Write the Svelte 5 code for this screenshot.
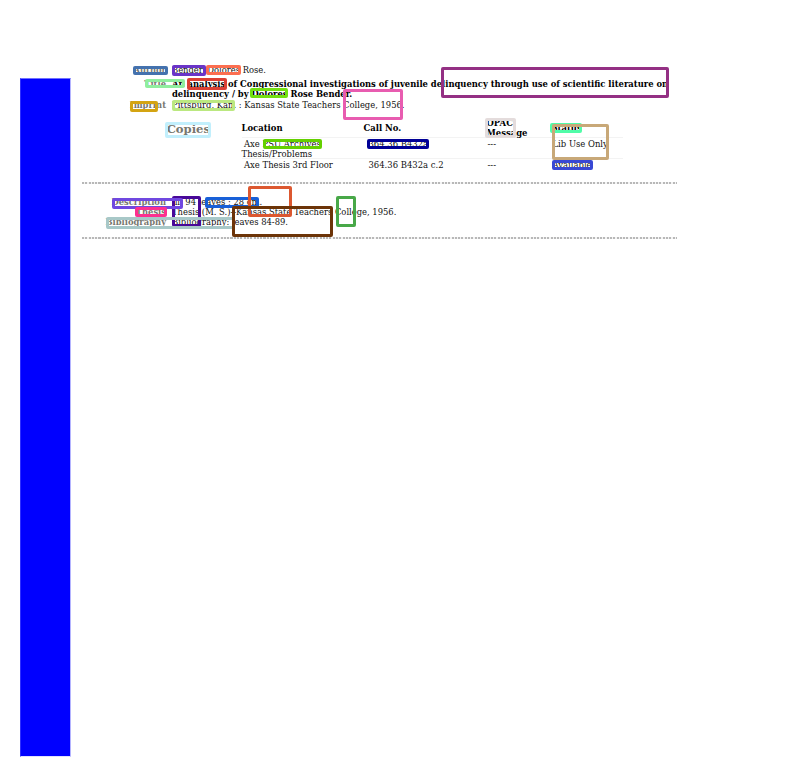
<script>
  const marks = [
    [133, 66, 35, 9, '#4472ae'],
    [172, 65, 34, 11, '#6a34c8'],
    [206, 65, 35, 10, '#fc6e50'],
    [145, 79, 40, 9, '#90ee9e'],
    [187, 78, 40, 12, '#dc4034'],
    [250, 88, 38, 10, '#72e010'],
    [130, 101, 28, 11, '#d4a412'],
    [172, 100, 63, 11, '#bbe880'],
    [343, 89, 60, 31, '#e85cb0'],
    [441, 67, 228, 31, '#943084'],
    [165, 122, 46, 16, '#c2effc'],
    [263, 139, 59, 10, '#64d000'],
    [367, 139, 62, 10, '#000096'],
    [485, 118, 31, 20, '#e4dcdc'],
    [550, 123, 32, 10, '#50fca8'],
    [552, 124, 57, 36, '#c8a878'],
    [552, 160, 41, 10, '#3848d4'],
    [172, 196, 29, 31, '#480898'],
    [112, 198, 71, 11, '#7048e0'],
    [205, 197, 54, 11, '#1860d8'],
    [135, 207, 32, 10, '#fc3090'],
    [106, 217, 129, 12, '#a8c8c8'],
    [248, 186, 44, 31, '#dc5830'],
    [336, 196, 20, 31, '#48a848'],
    [232, 206, 101, 31, '#6c3408']
  ];
</script>

<div class="page">
  <aside></aside>
  <main>
    <div class="row author"><b>Author</b><p>Bender, Dolores Rose.</p></div>
    <div class="row title"><b>Title</b><p>An analysis of Congressional investigations of juvenile delinquency through use of scientific literature on<br />delinquency / by Dolores Rose Bender.</p></div>
    <div class="row imprint"><b>Imprint</b><p>Pittsburg, Kan. : Kansas State Teachers College, 1956.</p></div>
    <div class="row copies">
      <b>Copies</b>
      <div class="table">
        <div class="tr head"><span>Location</span><span>Call No.</span><span>OPAC<br />Message</span><span>Status</span></div>
        <div class="tr first"><span><i></i>Axe PSU Archives<br />Thesis/Problems</span><span>364.36 B432a</span><span>---</span><span>Lib Use Only</span></div>
        <div class="tr last"><span><i></i>Axe Thesis 3rd Floor</span><span>364.36 B432a c.2</span><span>---</span><span>Available</span></div>
      </div>
    </div>
    <hr />
    <div class="notes">
      <div class="row"><b>Description</b><p>iii, 94 leaves ; 28 cm.</p></div>
      <div class="row"><b>Thesis</b><p>Thesis (M. S.)--Kansas State Teachers College, 1956.</p></div>
      <div class="row"><b>Bibliography</b><p>Bibliography: leaves 84-89.</p></div>
    </div>
    <hr />
  </main>
  {#each marks as [x, y, w, h, color]}
    <div class="mark" style="left:{x}px;top:{y}px;width:{w}px;height:{h}px;border-color:{color}"></div>
  {/each}
</div>

<style>
  .page {
    position: relative;
    display: flex;
    width: 803px;
    height: 768px;
    overflow: hidden;
    background: #fff;
    color: #111;
    font: 8.38px/10px "DejaVu Serif", serif;
    white-space: nowrap;
  }
  aside {
    box-sizing: border-box;
    width: 51px;
    height: 679px;
    margin: 78px 11px 0 20px;
    background: #00f;
    border: 1px solid;
    border-color: #7070ff #b4b4ff #e0e0ff #3030ff;
  }
  main { width: 595px; padding-top: 65px; }
  p { margin: 0; }
  .row { display: flex; gap: 6px; }
  .row > b { width: 84px; flex: none; display: flex; justify-content: flex-end; color: #77776f; }
  .author { height: 13.5px; }
  .title { height: 21.5px; }
  .title p { font-weight: bold; color: #000; }
  .imprint { height: 18px; }
  .copies { height: 64px; gap: 0; }
  .copies > b { width: 128px; margin-top: 6px; font-size: 11.6px; }
  .table { width: 381px; padding-left: 31.5px; font-size: 8.45px; }
  .tr { display: grid; grid-template-columns: 127px 119px 65px 70px; border-bottom: 1px solid #f3f3f3; box-sizing: border-box; }
  .head { height: 20px; font-weight: bold; color: #000; align-items: center; }
  .head span:nth-child(2) { margin-left: -5px; }
  .head span:nth-child(3) { margin-left: -1px; }
  .head span:nth-child(4) { margin-left: -1px; }
  .first { height: 21px; padding-top: 1px; }
  .last { height: 15px; padding-top: 1px; border: 0; }
  .tr i { display: inline-block; width: 2.5px; }
  hr { width: 595px; height: 2px; margin: 0; border: 0; background: repeating-linear-gradient(90deg, #b8b8b8 0 2px, #f4f4f4 2px 3.3px); }
  .notes { height: 53px; box-sizing: border-box; padding-top: 13px; }
  .mark { position: absolute; box-sizing: border-box; border: 3px solid; border-radius: 2px; }
</style>
